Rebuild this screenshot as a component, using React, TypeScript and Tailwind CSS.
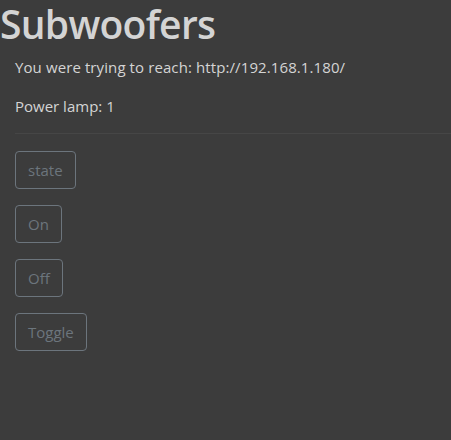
export default function App() {
  return (
    <div
      className="min-h-[440px] w-full bg-[#3c3c3c] text-[#d4d4d4]"
      style={{ fontFamily: '"Open Sans", "Noto Sans", sans-serif' }}
    >
      <h1 className="m-0 text-[39px] font-semibold leading-[48px] tracking-[-0.7px]">Subwoofers</h1>
      <div className="pl-[15px]">
        <p className="mt-[7px] text-[15px] leading-[24px] tracking-[0.1px]">You were trying to reach: http://192.168.1.180/</p>
        <p className="mt-[15px] text-[15px] leading-[24px]">Power lamp: 1</p>
        <div className="mt-[15px] h-px bg-[#464646]" />
        <div className="mt-[17px] flex flex-col items-start gap-[16px]">
          {["state", "On", "Off", "Toggle"].map((t) => (
            <button
              key={t}
              className="h-[38px] rounded-[4px] border border-[#6c757d] px-[12px] text-[15px] text-[#6c757d]"
            >
              {t}
            </button>
          ))}
        </div>
      </div>
    </div>
  );
}
